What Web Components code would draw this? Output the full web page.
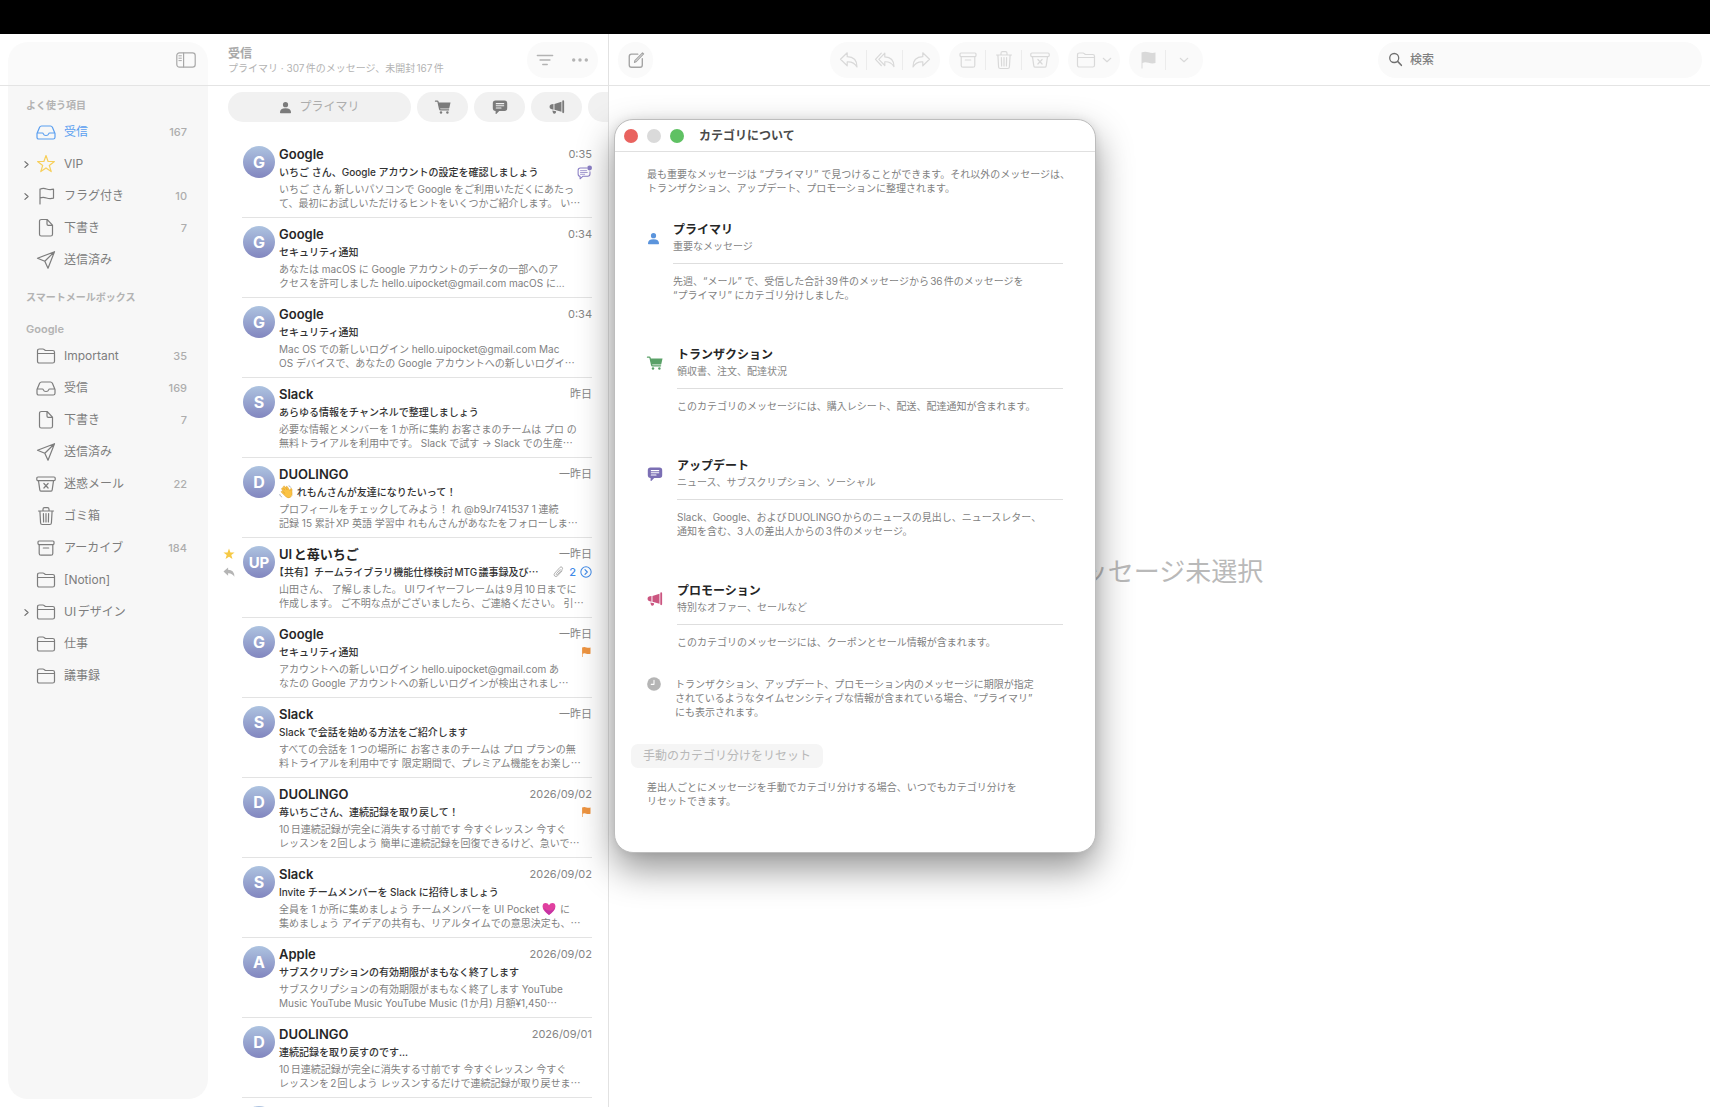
<!DOCTYPE html>
<html lang="ja">
<head>
<meta charset="utf-8">
<title>メール</title>
<style>
  html, body { margin: 0; height: 100%; }
  body {
    background: #fff; overflow: hidden;
    font-family: Inter, "Noto Sans CJK JP", sans-serif;
    font-size: 10px; line-height: 14px; color: #7f7f7f;
    text-autospace: normal;
  }
</style>
</head>
<body>
<mail-app></mail-app>
<script>
const define = (name, html, setup) => {
  const tpl = document.createElement('template');
  tpl.innerHTML = html;
  customElements.define(name, class extends HTMLElement {
    constructor() {
      super();
      this.attachShadow({ mode: 'open' }).append(tpl.content.cloneNode(true));
    }
    connectedCallback() { if (setup) setup(this, this.shadowRoot); }
  });
};

/* ---------- icons ---------- */
const ICONS = {
  inbox: '<path d="M1 11.5 3.6 5.2Q4.2 4 5.5 4h9q1.300 0 1.900 1.200L19 11.500v3.700q0 1.800-1.800 1.800H2.800Q1 17 1 15.200zM1.200 11h5.300q.5 0 .7.600.7 1.900 2.800 1.900t2.800-1.900q.2-.6.7-.6h5.300"/>',
  star: '<path d="m10 1.500 2.100 6h6.300l-5.100 3.900 1.900 6.200L10 13.900l-5.200 3.700 1.900-6.200L1.600 7.500h6.300z"/>',
  flag: '<path d="M4 18V3M4 3.300q3-1.500 6.500-.3t7 .2v9q-3.500 1-7-.200T4 12"/>',
  doc: '<path d="M5.500 1.500h5.600l5.400 5.600v9.100q0 1.800-1.800 1.800H5.300q-1.800 0-1.800-1.800V3.300q0-1.800 2-1.800zM11 1.800v4.200q0 1.300 1.300 1.300h4"/>',
  send: '<path d="M18.500 1.700 1.500 8.300l7.300 2.900 3.200 7zM8.800 11.200l9.700-9.500"/>',
  folder: '<path d="M1.500 5q0-2 2-2h3.400q.8 0 1.400.6l.4.400q.6.500 1.400.5h6.600q1.800 0 1.800 1.800v8.900q0 1.800-1.800 1.800H3.300q-1.800 0-1.800-1.800zM1.500 7.500h17"/>',
  junk: '<rect x=".8" y="3" width="18.400" height="3.600" rx="1.200"/><path d="m2.500 6.800 1.300 9q.2 1.400 1.600 1.400h9.200q1.400 0 1.600-1.400l1.300-9M7.900 9.500l4.200 4.500M12.100 9.500 7.900 14"/>',
  trash: '<path d="M2.500 5h15M7 4.800V3.200q0-1.500 1.500-1.500h3q1.500 0 1.500 1.500v1.600M3.900 5l.7 12q.1 1.500 1.600 1.500h7.600q1.500 0 1.600-1.500l.7-12M7.400 7.500l.2 8.500M10 7.500V16M12.600 7.500l-.2 8.500"/>',
  archive: '<rect x="2" y="3" width="16" height="3.600" rx="1"/><path d="M3.200 6.800v8.600q0 1.800 1.800 1.800h10q1.800 0 1.800-1.800V6.800M7.300 10h5.400"/>',
  sidebar: '<rect x=".8" y="2.800" width="18.400" height="14.400" rx="2.600"/><path d="M7.600 3v14"/><path d="M2.900 5.800h2.500M2.900 8.200h2.500M2.900 10.600h2.500" stroke-width="1"/>',
  chevron: '<path d="m6.500 3.500 7 6.500-7 6.500" stroke-width="2.600"/>',
  down: '<path d="m2.500 6.500 7.500 7 7.500-7" stroke-width="2.200"/>',
  filter: '<path d="M1.500 5h17M4.500 10h11M7.500 15h5" stroke-width="1.500"/>',
  more: '<g fill="currentColor" stroke="none"><circle cx="3" cy="10" r="1.900"/><circle cx="10" cy="10" r="1.900"/><circle cx="17" cy="10" r="1.900"/></g>',
  compose: '<path d="M12 3.500H5Q2.500 3.500 2.500 6v9.500Q2.500 18 5 18h9.500q2.500 0 2.500-2.500V8.500" stroke-width="1.500"/><path d="m8.300 12.700.4-1.900L17.200 2l1.300 1.300-8.600 8.700z"/>',
  reply: '<path d="M8.200 2.800 1.500 9.300l6.700 6.500v-3.900q6.500-.5 9.800 5 0-9.900-9.800-10.200z"/>',
  replyall: '<path d="M9.800 3.200 3.800 9.300l6 6.200v-3.700q6-.4 9.200 4.800 0-9.300-9.200-9.700z"/><path d="M6.300 3.200.5 9.300l5.800 6.200"/>',
  forward: '<path d="m11.800 2.800 6.700 6.500-6.700 6.500v-3.900q-6.500-.5-9.800 5 0-9.900 9.800-10.200z"/>',
  flagfill: '<path d="M3.500 18.500V2.500q3.500-1.300 7-.2t7 .2v10.500q-3.500 1-7-.2t-6 .2v5.500z" fill="currentColor" stroke="none"/>',
  search: '<circle cx="8.300" cy="8" r="6" stroke-width="1.700"/><path d="m12.800 12.500 5 5.300" stroke-width="2"/>',
  person: '<g fill="currentColor" stroke="none"><circle cx="10" cy="5.600" r="4"/><path d="M1.500 17.800q0-6.500 8.500-6.500t8.500 6.500q0 .9-1 .9h-15q-1 0-1-.9z"/></g>',
  cart: '<path d="M.6 2.700h2.200q.8 0 1 .8l2 9q.2 1 1.200 1h10" stroke-width="1.600"/><path d="M4 4.500h15.400l-1.500 6.600q-.2.900-1.100.9H5.700z" fill="currentColor" stroke="none"/><g fill="currentColor" stroke="none"><circle cx="7.500" cy="16.900" r="1.500"/><circle cx="15.500" cy="16.900" r="1.500"/></g>',
  bubble: '<path d="M4.300 2h11.400Q19 2 19 5.300v6.400q0 3.300-3.300 3.300H9l-3.600 3.600q-.8.700-.9-.4V15Q1 14.800 1 11.700V5.300Q1 2 4.300 2z" fill="currentColor" stroke="none"/><path d="M5.300 5.800h9.400M5.300 8.500h9.400M5.300 11.200h6" style="stroke:var(--icon-hole,#f1f1f1)" stroke-width="1.300"/>',
  horn: '<g fill="currentColor" stroke="none"><path d="M16.600 2.700q0-1 1.100-1T18.900 2.700v14q0 1-1.200 1t-1.100-1zM6.800 6.200 15.600 3.500v12.300l-8.800-2.400zM5.600 6.300v7Q.7 13.300.7 9.800t4.900-3.500zM4.200 14.300l4.700 1.100q.2 3-1.900 3.100-1.700.1-2.300-2z"/></g>',
  clock: '<circle cx="10" cy="10" r="9.800" fill="currentColor" stroke="none"/><path d="M10 4.500V10.500H6" stroke="#fff" stroke-width="1.500"/>',
  starfill: '<path d="m10 1 2.400 6.500h6.900l-5.500 4.200 2 6.800-5.800-4-5.800 4 2-6.800L.7 7.500h6.900z" fill="currentColor" stroke="none"/>',
  replyfill: '<path d="M8.500 2.500.8 9.300l7.700 6.800v-4q6.500-.5 10.500 6 0-11.400-10.500-11.700z" fill="currentColor" stroke="none"/>',
  clip: '<path d="m15.800 8.500-6.500 7q-2 2-4 .3t.1-4.200l7.400-8.200q1.500-1.500 3-.2t.2 3l-6.800 7.600q-.8.800-1.500.2t.1-1.600l5.300-5.900" stroke-width="1.300"/>',
  go: '<circle cx="10" cy="10" r="8.600" stroke-width="1.700"/><path d="m8.300 6 3.800 4-3.800 4" stroke-width="1.900"/>',
  bubblenew: '<path d="M13 4H4.500Q1.500 4 1.500 7v5q0 3 2.600 3.100v3.300l3.600-3.300h6.600q3 0 3-3V9" stroke-width="1.400"/><path d="M4.700 7.500h8M4.700 10h9M4.700 12.400h5.500" stroke-width="1"/><circle cx="16.800" cy="4" r="3.200" fill="currentColor" stroke="none"/>',
  wave: '<g stroke="#d99a22" stroke-width=".7" fill="#fbc344"><path d="M5.800 8.800 3.900 5.900q-.5-1.200.5-1.700t1.700.4l2 2.800-2.100-4q-.4-1.200.7-1.700t1.700.5l3.400 5-1.900-3.700q-.3-1.100.7-1.500t1.500.6l3.400 5.700.7-2.500q.6-1.200 1.600-.7t.8 2q-.4 3 .1 4.800.7 3.600-2.300 5.600-3.700 2.200-6.800-1L3.400 10.500q-.7-1 .2-1.700t1.600.1l2.600 2.600z"/></g><path d="M1 13.500q.3 2.600 2.900 3.600M14.200 1.200q2 .4 2.700 2.200" stroke="#8c9aa8" stroke-width="1"/>',
  heart: '<path d="M10 18.500Q.8 12 .8 6.300.9 1.700 5.200 1.600q3.200 0 4.800 3 1.600-3 4.800-3 4.300.1 4.400 4.700Q19.200 12 10 18.500z" fill="#e0409f" stroke="none"/><path d="M10 18.500Q3.500 13.500 3 8.500q4 4.500 9 4 4-.5 6.500-4.500Q17.500 13 10 18.500z" fill="#b92fa8" opacity=".7" stroke="none"/>'
};
customElements.define('mail-icon', class extends HTMLElement {
  static observedAttributes = ['name'];
  constructor() {
    super();
    this.attachShadow({ mode: 'open' }).innerHTML = `
<style>
  :host { display: inline-block; flex: none; width: var(--size, 20px); height: var(--size, 20px); }
  svg { display: block; width: 100%; height: 100%; overflow: visible; }
</style>
<svg viewBox="0 0 20 20" fill="none" stroke="currentColor" stroke-width="1.200" stroke-linecap="round" stroke-linejoin="round" aria-hidden="true"></svg>`;
  }
  attributeChangedCallback(attr, old, value) {
    this.shadowRoot.querySelector('svg').innerHTML = ICONS[value] || '';
  }
});

/* ---------- sidebar ---------- */
define('sidebar-item', `
<style>
  :host { display: block; color: #7d7d7d; }
  :host([tone=blue]) { color: #5b9ff0; }
  a { display: flex; align-items: center; height: 32px; padding: 0 21px 0 14px; color: inherit; text-decoration: none; font-size: 12px; }
  .disc { --size: 9px; width: 14px; display: flex; color: #6f6f6f; visibility: hidden; align-items: center; }
  :host([open]) .disc { visibility: visible; }
  .glyph { margin-right: 8px; }
  :host([tone=yellow]) .glyph { color: #f7cf5b; }
  .label { flex: 1; }
  .count { font-size: 11px; font-weight: 500; color: #adadad; }
</style>
<a href="#"><span class="disc"><mail-icon name="chevron"></mail-icon></span><mail-icon class="glyph"></mail-icon><span class="label"><slot></slot></span><span class="count"></span></a>`,
(el, root) => {
  root.querySelector('.glyph').setAttribute('name', el.getAttribute('icon'));
  root.querySelector('.count').textContent = el.getAttribute('count') || '';
});

define('sidebar-section', `
<style>
  :host { display: block; margin-bottom: 11px; }
  h2 { margin: 0; padding: 0 0 1px 18px; line-height: 20px; font-size: 10px; font-weight: 600; color: #b3b3b3; }
  :host([latin]) h2 { font-size: 11px; }
</style>
<h2></h2><slot></slot>`,
(el, root) => { root.querySelector('h2').textContent = el.getAttribute('heading'); });

define('mail-sidebar', `
<style>
  :host { display: flex; flex-direction: column; min-height: 0; }
  .top { box-sizing: border-box; height: 52px; padding: 8px 0 0 8px; border-bottom: 1px solid #e4e4e4; }
  .lid { box-sizing: border-box; height: 100%; padding: 0 12px 8px 0; display: flex; align-items: center; justify-content: flex-end; background: #fafafa; border-radius: 20px 20px 0 0; }
  button { border: 0; background: none; padding: 0; display: flex; color: #a8a8a8; }
  nav { flex: 1; margin: 0 0 8px 8px; padding-top: 9px; background: #f7f7f7; border-radius: 0 0 20px 20px; }
</style>
<div class="top"><div class="lid"><button aria-label="サイドバー"><mail-icon name="sidebar"></mail-icon></button></div></div>
<nav>
  <sidebar-section heading="よく使う項目">
    <sidebar-item icon="inbox" tone="blue" count="167">受信</sidebar-item>
    <sidebar-item icon="star" tone="yellow" open>VIP</sidebar-item>
    <sidebar-item icon="flag" open count="10">フラグ付き</sidebar-item>
    <sidebar-item icon="doc" count="7">下書き</sidebar-item>
    <sidebar-item icon="send">送信済み</sidebar-item>
  </sidebar-section>
  <sidebar-section heading="スマートメールボックス"></sidebar-section>
  <sidebar-section heading="Google" latin>
    <sidebar-item icon="folder" count="35">Important</sidebar-item>
    <sidebar-item icon="inbox" count="169">受信</sidebar-item>
    <sidebar-item icon="doc" count="7">下書き</sidebar-item>
    <sidebar-item icon="send">送信済み</sidebar-item>
    <sidebar-item icon="junk" count="22">迷惑メール</sidebar-item>
    <sidebar-item icon="trash">ゴミ箱</sidebar-item>
    <sidebar-item icon="archive" count="184">アーカイブ</sidebar-item>
    <sidebar-item icon="folder">[Notion]</sidebar-item>
    <sidebar-item icon="folder" open>UIデザイン</sidebar-item>
    <sidebar-item icon="folder">仕事</sidebar-item>
    <sidebar-item icon="folder">議事録</sidebar-item>
  </sidebar-section>
</nav>`);

/* ---------- message list ---------- */
define('mail-row', `
<style>
  :host { display: flex; height: 80px; padding-right: 16px; white-space: nowrap; }
  .gutter { --size: 12px; box-sizing: border-box; width: 34px; padding: 10px 0 0 15px; display: flex; flex-direction: column; gap: 6px; color: #b5b5b5; }
  .gutter .s { color: #f6c945; }
  article { box-sizing: border-box; flex: 1; min-width: 0; display: flex; gap: 4px; padding: 8px 0 0 1px; border-bottom: 1px solid #e3e3e3; }
  .avatar { flex: none; width: 32px; height: 32px; border-radius: 50%; background: linear-gradient(#adc3e0, #8286bf); color: #fff; font-size: 16px; font-weight: 700; line-height: 33px; text-align: center; }
  .avatar.two { font-size: 15px; }
  .body { flex: 1; min-width: 0; }
  .line { display: flex; align-items: center; justify-content: space-between; }
  h3 { margin: 0; font-size: 13px; line-height: 17px; font-weight: 600; color: #262626; }
  time { font-size: 11px; line-height: 17px; color: #858585; }
  .subject { height: 18px; font-weight: 500; color: #333; text-spacing-trim: trim-start; }
  .marks { --size: 14px; display: flex; align-items: center; gap: 4px; }
  p { margin: 1px 0 0; color: #7f7f7f; }
  .e { font-family: "Noto Sans CJK JP", sans-serif; }
  .emo { --size: 14px; vertical-align: -3px; margin-right: 1px; }
  .num { font-size: 11px; color: #3f8ae8; font-weight: 500; }
</style>
<div class="gutter"></div>
<article>
  <div class="avatar"></div>
  <div class="body">
    <div class="line"><h3></h3><time></time></div>
    <div class="line subject"><span class="title"></span><span class="marks"></span></div>
    <p></p>
  </div>
</article>`,
(el, root) => {
  const m = el.data, q = s => root.querySelector(s);
  q('.avatar').textContent = m.av;
  if (m.av.length > 1) q('.avatar').classList.add('two');
  q('h3').textContent = m.from;
  q('time').textContent = m.date;
  q('.title').innerHTML = m.subj;
  q('.marks').innerHTML = m.marks || '';
  q('p').innerHTML = m.text.join('<br>');
  q('.gutter').innerHTML = m.gutter || '';
});

const E = '<span class="e">…</span>';
const ORANGE = '<mail-icon name="flagfill" style="color:#ee9440;--size:12px"></mail-icon>';
const MAIL = [
  { av: 'G', from: 'Google', date: '0:35', subj: 'いちご さん、Google アカウントの設定を確認しましょう',
    marks: '<mail-icon name="bubblenew" style="color:#8b7fc6;--size:15px"></mail-icon>',
    text: ['いちご さん 新しいパソコンで Google をご利用いただくにあたっ', 'て、最初にお試しいただけるヒントをいくつかご紹介します。 い' + E] },
  { av: 'G', from: 'Google', date: '0:34', subj: 'セキュリティ通知',
    text: ['あなたは macOS に Google アカウントのデータの一部へのア', 'クセスを許可しました hello.uipocket@gmail.com macOS に...'] },
  { av: 'G', from: 'Google', date: '0:34', subj: 'セキュリティ通知',
    text: ['Mac OS での新しいログイン hello.uipocket@gmail.com Mac', 'OS デバイスで、あなたの Google アカウントへの新しいログイ' + E] },
  { av: 'S', from: 'Slack', date: '昨日', subj: 'あらゆる情報をチャンネルで整理しましょう',
    text: ['必要な情報とメンバーを 1 か所に集約 お客さまのチームは プロ の', '無料トライアルを利用中です。 Slack で試す → Slack での生産' + E] },
  { av: 'D', from: 'DUOLINGO', date: '一昨日', subj: '<mail-icon class="emo" name="wave"></mail-icon> れもんさんが友達になりたいって！',
    text: ['プロフィールをチェックしてみよう！ れ @b9Jr741537 1 連続', '記録 15 累計XP 英語 学習中 れもんさんがあなたをフォローしま' + E] },
  { av: 'UP', from: 'UIと苺いちご', date: '一昨日', subj: '【共有】チームライブラリ機能仕様検討MTG議事録及び' + E,
    marks: '<mail-icon name="clip" style="color:#a9a9a9"></mail-icon><span class="num">2</span><mail-icon name="go" style="color:#3f8ae8;--size:12px"></mail-icon>',
    gutter: '<mail-icon class="s" name="starfill"></mail-icon><mail-icon name="replyfill"></mail-icon>',
    text: ['山田さん、 了解しました。 UIワイヤーフレームは9月10日までに', '作成します。 ご不明な点がございましたら、ご連絡ください。 引' + E] },
  { av: 'G', from: 'Google', date: '一昨日', subj: 'セキュリティ通知', marks: ORANGE,
    text: ['アカウントへの新しいログイン hello.uipocket@gmail.com あ', 'なたの Google アカウントへの新しいログインが検出されまし' + E] },
  { av: 'S', from: 'Slack', date: '一昨日', subj: 'Slack で会話を始める方法をご紹介します',
    text: ['すべての会話を 1 つの場所に お客さまのチームは プロ プランの無', '料トライアルを利用中です 限定期間で、プレミアム機能をお楽し' + E] },
  { av: 'D', from: 'DUOLINGO', date: '2026/09/02', subj: '苺いちごさん、連続記録を取り戻して！', marks: ORANGE,
    text: ['10日連続記録が完全に消失する寸前です 今すぐレッスン 今すぐ', 'レッスンを2回しよう 簡単に連続記録を回復できるけど、急いで' + E] },
  { av: 'S', from: 'Slack', date: '2026/09/02', subj: 'Invite チームメンバーを Slack に招待しましょう',
    text: ['全員を 1 か所に集めましょう チームメンバーを UI Pocket <mail-icon class="emo" name="heart"></mail-icon> に', '集めましょう アイデアの共有も、リアルタイムでの意思決定も、' + E] },
  { av: 'A', from: 'Apple', date: '2026/09/02', subj: 'サブスクリプションの有効期限がまもなく終了します',
    text: ['サブスクリプションの有効期限がまもなく終了します YouTube', 'Music YouTube Music YouTube Music (1か月) 月額¥1,450' + E] },
  { av: 'D', from: 'DUOLINGO', date: '2026/09/01', subj: '連続記録を取り戻すのです...',
    text: ['10日連続記録が完全に消失する寸前です 今すぐレッスン 今すぐ', 'レッスンを2回しよう レッスンするだけで連続記録が取り戻せま' + E] },
  { av: '', from: '', date: '', subj: '', text: [''] }
];

define('mail-list', `
<style>
  :host { display: flex; flex-direction: column; min-width: 0; overflow: hidden; border-right: 1px solid #e2e2e2; }
  header { box-sizing: border-box; height: 52px; flex: none; padding: 0 10px 0 20px; display: flex; align-items: center; justify-content: space-between; border-bottom: 1px solid #e4e4e4; color: #b3b3b3; white-space: nowrap; }
  h1 { margin: 0; padding-top: 2px; font-size: 12px; line-height: 15px; font-weight: 600; color: #a9a9a9; }
  .tools { display: flex; align-items: center; gap: 17px; height: 36px; padding: 0 9px; background: #fafafa; border-radius: 18px; --size: 18px; }
  button { font: inherit; color: inherit; border: 0; padding: 0; background: none; display: flex; align-items: center; justify-content: center; }
  .chips { display: flex; gap: 6px; flex: none; margin: 6px 0 16px 20px; overflow: hidden; --size: 16px; --icon-hole: #f1f1f1; }
  .chips button { flex: none; width: 51px; height: 30px; border-radius: 15px; background: #f1f1f1; color: #7b7b7b; }
  .chips .main { width: 183px; gap: 7px; font-size: 12px; }
  .chips .main mail-icon { --size: 13px; }
  .chips .main span { color: #adadad; }
</style>
<header>
  <div><h1>受信</h1><div>プライマリ · 307件のメッセージ、未開封167件</div></div>
  <div class="tools"><button aria-label="フィルタ"><mail-icon name="filter"></mail-icon></button><button aria-label="その他"><mail-icon name="more"></mail-icon></button></div>
</header>
<div class="chips">
  <button class="main"><mail-icon name="person"></mail-icon><span>プライマリ</span></button>
  <button aria-label="トランザクション"><mail-icon name="cart"></mail-icon></button>
  <button aria-label="アップデート"><mail-icon name="bubble"></mail-icon></button>
  <button aria-label="プロモーション"><mail-icon name="horn"></mail-icon></button>
  <button aria-label="すべてのメール"></button>
</div>
<main></main>`,
(el, root) => {
  const box = root.querySelector('main');
  for (const m of MAIL) {
    const row = document.createElement('mail-row');
    row.data = m;
    box.append(row);
  }
});

/* ---------- detail pane ---------- */
define('mail-detail', `
<style>
  :host { display: flex; flex-direction: column; min-width: 0; }
  header { box-sizing: border-box; height: 52px; flex: none; padding: 0 8px 0 9px; display: flex; align-items: center; justify-content: space-between; border-bottom: 1px solid #e4e4e4; color: #d9d9d9; }
  button { border: 0; padding: 0; background: none; color: inherit; display: flex; align-items: center; justify-content: center; }
  .pill { box-sizing: border-box; display: flex; align-items: center; height: 36px; padding: 0 1px; border-radius: 18px; background: #fafafa; }
  .pill button { width: 36px; height: 20px; border-right: 1px solid #ececec; }
  .pill button:last-child { border-right: 0; }
  .compose { width: 35px; justify-content: center; color: #a3a3a3; --size: 18px; }
  .groups { display: flex; gap: 9px; }
  .left { display: flex; gap: 177px; }
  .pill .folder { width: 50px; gap: 6px; }
  .small { --size: 10px; }
  .search { width: 324px; padding: 0 10px; gap: 7px; color: #6f6f6f; --size: 15px; }
  input { flex: 1; min-width: 0; border: 0; outline: 0; background: none; padding: 0; font: 500 12px/18px Inter, "Noto Sans CJK JP", sans-serif; }
  input::placeholder { color: #808080; opacity: 1; }
  .empty { flex: 1; display: grid; place-items: center; padding-bottom: 50px; font-size: 26px; line-height: 36px; color: #b9b9b9; }
</style>
<header>
  <div class="left">
    <button class="pill compose" aria-label="新規メッセージ"><mail-icon name="compose"></mail-icon></button>
    <div class="groups">
      <div class="pill"><button aria-label="返信"><mail-icon name="reply"></mail-icon></button><button aria-label="全員に返信"><mail-icon name="replyall"></mail-icon></button><button aria-label="転送"><mail-icon name="forward"></mail-icon></button></div>
      <div class="pill"><button aria-label="アーカイブ"><mail-icon name="archive"></mail-icon></button><button aria-label="ゴミ箱"><mail-icon name="trash"></mail-icon></button><button aria-label="迷惑メール"><mail-icon name="junk"></mail-icon></button></div>
      <div class="pill"><button class="folder" aria-label="移動"><mail-icon name="folder"></mail-icon><mail-icon class="small" name="down"></mail-icon></button></div>
      <div class="pill"><button aria-label="フラグ"><mail-icon name="flagfill"></mail-icon></button><button aria-label="フラグの色"><mail-icon class="small" name="down"></mail-icon></button></div>
    </div>
  </div>
  <label class="pill search"><mail-icon name="search"></mail-icon><input type="search" placeholder="検索" aria-label="検索"></label>
</header>
<div class="empty">メッセージ未選択</div>`);

/* ---------- category window ---------- */
define('category-card', `
<style>
  :host { display: flex; margin-bottom: 45px; }
  .icon { width: 30px; padding-top: 8px; --size: 16px; --icon-hole: #fff; }
  :host([icon=person]) .icon { width: 26px; --size: 13px; padding-top: 10px; }
  .main { flex: 1; min-width: 0; white-space: nowrap; }
  h3 { margin: 0 0 1px; font-size: 12px; line-height: 16px; font-weight: 700; color: #262626; }
  .sub { color: #858585; padding-bottom: 10px; border-bottom: 1px solid #dedede; margin-bottom: 10px; }
</style>
<div class="icon"><mail-icon></mail-icon></div>
<div class="main"><h3></h3><div class="sub"></div><slot></slot></div>`,
(el, root) => {
  const i = root.querySelector('mail-icon');
  i.setAttribute('name', el.getAttribute('icon'));
  i.style.color = el.getAttribute('tint');
  root.querySelector('h3').textContent = el.getAttribute('heading');
  root.querySelector('.sub').textContent = el.getAttribute('sub');
});

define('category-window', `
<style>
  :host { display: block; box-sizing: border-box; width: 482px; background: #fff; border: 1px solid #bdbdbd; border-radius: 19px; box-shadow: 0 16px 36px rgba(0,0,0,.42), 0 0 10px rgba(0,0,0,.08); white-space: nowrap; }
  header { display: flex; align-items: center; gap: 9px; height: 31px; padding-left: 9px; border-bottom: 1px solid #e0e0e0; }
  header button { width: 14px; height: 14px; padding: 0; border: 0; border-radius: 50%; background: #e9635f; }
  header button:nth-child(2) { background: #dadada; }
  header button:nth-child(3) { background: #5fc163; }
  h2 { margin: 0 0 0 6px; font-size: 12px; line-height: 16px; font-weight: 600; color: #4a4a4a; }
  .content { padding: 15px 32px 44px; }
  p { margin: 0; }
  .intro { margin-bottom: 27px; }
  category-card:last-of-type { margin-bottom: 28px; }
  .time { display: flex; gap: 14px; margin-bottom: 25px; }
  .time mail-icon { --size: 14px; color: #b5b5b5; }
  .reset { display: block; height: 24px; margin: 0 0 12px -16px; padding: 0 12px; border: 0; border-radius: 7px; background: #f5f5f5; color: #b8b8b8; font: 12px/24px Inter, "Noto Sans CJK JP", sans-serif; }
</style>
<header><button aria-label="閉じる"></button><button aria-label="しまう"></button><button aria-label="拡大"></button><h2>カテゴリについて</h2></header>
<div class="content">
  <p class="intro">最も重要なメッセージは “プライマリ” で見つけることができます。それ以外のメッセージは、<br>トランザクション、アップデート、プロモーションに整理されます。</p>
  <category-card icon="person" tint="#5b94dc" heading="プライマリ" sub="重要なメッセージ">先週、“メール” で、受信した合計39件のメッセージから36件のメッセージを<br>“プライマリ” にカテゴリ分けしました。</category-card>
  <category-card icon="cart" tint="#5aa168" heading="トランザクション" sub="領収書、注文、配達状況">このカテゴリのメッセージには、購入レシート、配送、配達通知が含まれます。</category-card>
  <category-card icon="bubble" tint="#7b6fb4" heading="アップデート" sub="ニュース、サブスクリプション、ソーシャル">Slack、Google、およびDUOLINGOからのニュースの見出し、ニュースレター、<br>通知を含む、3人の差出人からの3件のメッセージ。</category-card>
  <category-card icon="horn" tint="#cb5580" heading="プロモーション" sub="特別なオファー、セールなど">このカテゴリのメッセージには、クーポンとセール情報が含まれます。</category-card>
  <div class="time"><mail-icon name="clock"></mail-icon><p>トランザクション、アップデート、プロモーション内のメッセージに期限が指定<br>されているようなタイムセンシティブな情報が含まれている場合、“プライマリ”<br>にも表示されます。</p></div>
  <button class="reset" disabled>手動のカテゴリ分けをリセット</button>
  <p>差出人ごとにメッセージを手動でカテゴリ分けする場合、いつでもカテゴリ分けを<br>リセットできます。</p>
</div>`);

define('mail-app', `
<style>
  :host { box-sizing: border-box; display: grid; grid-template-columns: 208px 401px minmax(0, 1fr); grid-template-rows: minmax(0, 1fr); height: 100vh; border-top: 34px solid #000; position: relative; overflow: hidden; }
  category-window { position: absolute; left: 614px; top: 85px; }
</style>
<mail-sidebar></mail-sidebar>
<mail-list></mail-list>
<mail-detail></mail-detail>
<category-window></category-window>`);
</script>
</body>
</html>
